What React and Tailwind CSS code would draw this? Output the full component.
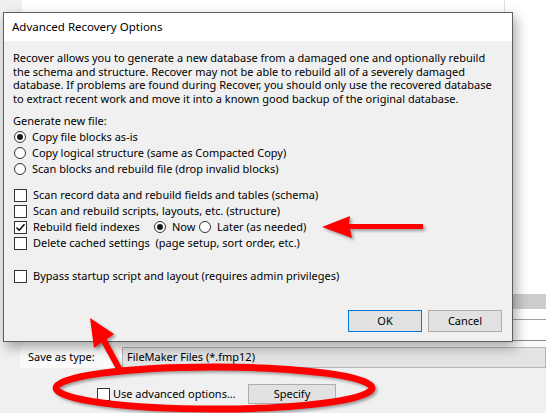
import React from 'react'

const ui = "font-['Noto_Sans','Open_Sans',sans-serif] text-[11px] text-black"

function Radio({ checked }) {
  return (
    <span className="w-[12px] h-[12px] shrink-0 rounded-full border border-[#333] bg-white flex items-center justify-center">
      {checked && <span className="w-[6px] h-[6px] rounded-full bg-[#1b1b1b]" />}
    </span>
  )
}

function Checkbox({ checked }) {
  return (
    <span className="w-[13px] h-[13px] shrink-0 border border-[#333] bg-white flex items-center justify-center">
      {checked && (
        <svg width="11" height="11" viewBox="0 0 11 11">
          <path d="M1.5 5.5 L4.2 8.2 L9.5 2.2" fill="none" stroke="#000" strokeWidth="1.4" />
        </svg>
      )}
    </span>
  )
}

function Option({ type, checked, children, h = 'h-[16px]' }) {
  return (
    <div className={`flex items-center ${h} pl-[10px] whitespace-nowrap`}>
      {type === 'radio' ? <Radio checked={checked} /> : <Checkbox checked={checked} />}
      <span className={type === 'radio' ? 'ml-[6px]' : 'ml-[6px]'}>{children}</span>
    </div>
  )
}

function Button({ children, focus }) {
  return (
    <div
      className={`w-[74px] h-[22px] flex items-center justify-center bg-[#e1e1e1] border ${
        focus ? 'border-[#0078d7]' : 'border-[#adadad]'
      }`}
    >
      {children}
    </div>
  )
}

function RecoveryDialog() {
  return (
    <div className="absolute left-[3px] top-[12px] w-[510px] h-[330px] border border-[#5f5f5f] bg-[#f0f0f0] shadow-[3px_5px_12px_rgba(0,0,0,0.35)] flex flex-col">
      <div className="h-[28px] bg-white flex items-center pl-[8px] text-[11.5px]">Advanced Recovery Options</div>

      <div className="flex flex-col">
        <div className="pt-[10px] pl-[9px] leading-[13.5px] whitespace-nowrap">
          <div>Recover allows you to generate a new database from a damaged one and optionally rebuild</div>
          <div>the schema and structure. Recover may not be able to rebuild all of a severely damaged</div>
          <div>database. If problems are found during Recover, you should only use the recovered database</div>
          <div>to extract recent work and move it into a known good backup of the original database.</div>
        </div>

        <div className="mt-[9px] h-[15px] pl-[9px] flex items-center">Generate new file:</div>
        <Option type="radio" checked>Copy file blocks as-is</Option>
        <Option type="radio">Copy logical structure (same as Compacted Copy)</Option>
        <Option type="radio">Scan blocks and rebuild file (drop invalid blocks)</Option>

        <div className="mt-[10px]">
          <Option type="check">Scan record data and rebuild fields and tables (schema)</Option>
          <Option type="check">Scan and rebuild scripts, layouts, etc. (structure)</Option>
          <div className="flex items-center h-[16px] pl-[10px] whitespace-nowrap">
            <Checkbox checked />
            <span className="ml-[6px] w-[121px]">Rebuild field indexes</span>
            <Radio checked />
            <span className="ml-[6px] w-[27px]">Now</span>
            <Radio />
            <span className="ml-[6px]">Later (as needed)</span>
          </div>
          <Option type="check">Delete cached settings&nbsp; (page setup, sort order, etc.)</Option>
        </div>

        <div className="mt-[17px]">
          <Option type="check">Bypass startup script and layout (requires admin privileges)</Option>
        </div>

        <div className="mt-[26px] flex justify-end gap-[6px] pr-[10px]">
          <Button focus>OK</Button>
          <Button>Cancel</Button>
        </div>
      </div>
    </div>
  )
}

function Annotations() {
  return (
    <svg
      className="absolute inset-0 pointer-events-none drop-shadow-[2px_2px_1.5px_rgba(0,0,0,0.35)]"
      width="546"
      height="413"
      viewBox="0 0 546 413"
    >
      <polygon
        points="322,227 350,216 349,224 423,224 423,229 350,229 352,238"
        fill="#ff0000"
      />
      <polygon points="90,318 114,334 106.6,339.6 123.6,370.6 118.4,373.4 101.4,342.4 94,348" fill="#ff0000" />
      <ellipse cx="214" cy="388" rx="158" ry="21" fill="none" stroke="#ff0000" strokeWidth="7" />
    </svg>
  )
}

export default function App() {
  return (
    <div className={`relative w-[546px] h-[413px] overflow-hidden bg-[#f0f0f0] ${ui}`}>
      {/* save dialog underneath */}
      <div className="h-[347px] flex">
        <div className="w-[22px] bg-[#f0f0f0]" />
        <div className="flex-1 bg-white flex flex-col">
          <div className="h-[294px] flex">
            <div className="w-[482px]" />
            <div className="border-l border-[#dde3ea]" />
          </div>
          <div className="h-[15px] bg-[#cdcdcd]" />
          <div className="h-[10px]" />
          <div className="h-[21px] border-t border-[#a0a0a0]" />
          <div className="flex-1 border-t border-[#8a8a8a] bg-[#fafafa]" />
        </div>
      </div>

      <div className="h-[21px] flex items-stretch">
        <div className="w-[20px]" />
        <div className="w-[102px] bg-[#fafafa] flex items-center pl-[8px] pb-[1px]">Save as type:</div>
        <div className="flex-1 border border-[#b5b5b5] bg-[#e3e3e3] flex items-center pl-[4px]">
          FileMaker Files (*.fmp12)
        </div>
      </div>

      <div className="mt-[16px] h-[20px] flex items-center pl-[97px]">
        <Checkbox />
        <span className="ml-[3px] w-[135px]">Use advanced options...</span>
        <div className="w-[88px] h-[20px] bg-[#e1e1e1] border border-[#adadad] flex items-center justify-center">
          Specify
        </div>
      </div>

      <RecoveryDialog />
      <Annotations />
    </div>
  )
}
